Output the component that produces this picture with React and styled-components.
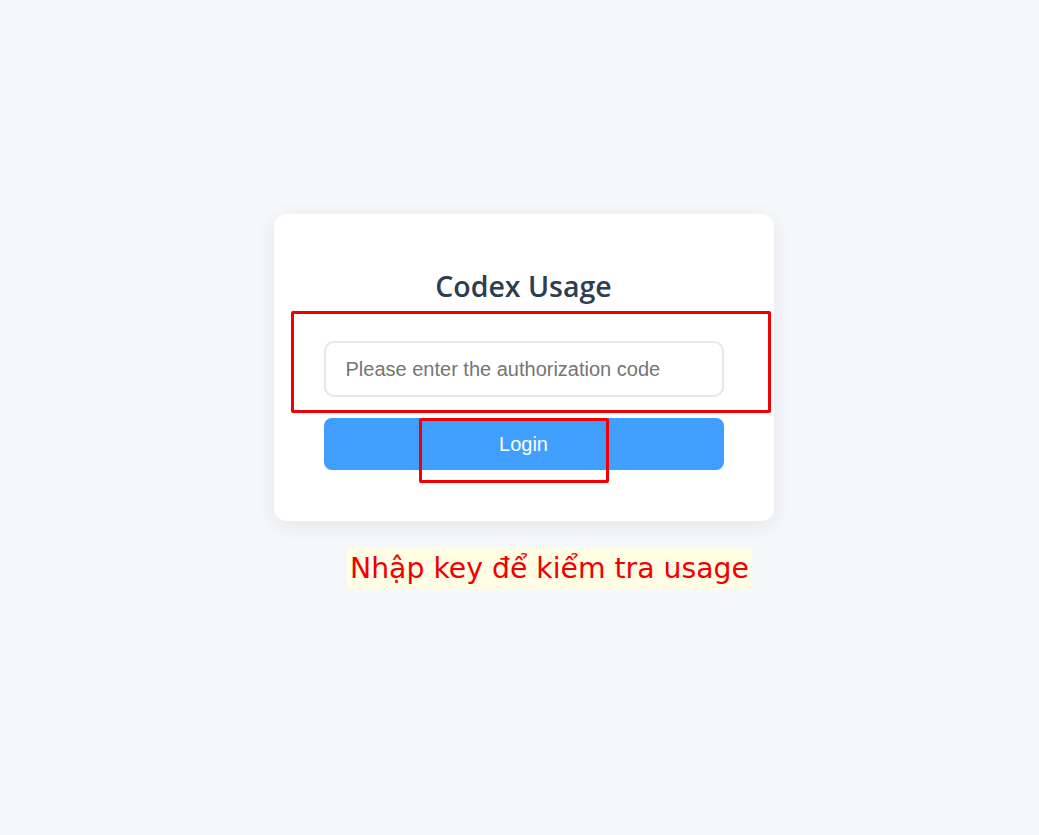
import React, { useState } from 'react'
import styled, { createGlobalStyle } from 'styled-components'

const GlobalStyle = createGlobalStyle`
    html, body {
        margin: 0;
        padding: 0;
        background: #f5f7fa;
    }

    body {
        min-height: 835px;
    }
`

const Page = styled.div`
    min-height: 835px;
    display: flex;
    flex-direction: column;
    align-items: center;
    padding: 214px 0px 0px 8px;
    box-sizing: border-box;
`

const Card = styled.div`
    position: relative;
    width: 500px;
    box-sizing: border-box;
    padding: 54px 50px 51px 50px;
    background: #ffffff;
    border-radius: 12px;
    box-shadow: 0 4px 20px rgba(0, 0, 0, 0.08);
    display: flex;
    flex-direction: column;
    align-items: stretch;
`

const Title = styled.h2`
    margin: 0px 0px 37px 0px;
    text-align: center;
    font-family: 'Open Sans', 'Noto Sans', sans-serif;
    font-weight: 600;
    font-size: 28.5px;
    line-height: 36px;
    color: #2c3e50;
`

const CodeInput = styled.input`
    height: 56px;
    box-sizing: border-box;
    padding: 0px 20px;
    border: 2px solid #e4e7ed;
    border-radius: 10px;
    outline: none;
    font-family: 'Liberation Sans', Arial, sans-serif;
    font-size: 20px;
    color: #303133;
    background: #ffffff;

    &::placeholder {
        color: #757575;
    }
`

const LoginButton = styled.button`
    margin-top: 21px;
    height: 52px;
    border: none;
    border-radius: 8px;
    background: #409eff;
    color: #ffffff;
    font-family: 'Liberation Sans', Arial, sans-serif;
    font-size: 20px;
    cursor: pointer;
`

// red marker boxes drawn over the card
const Marker = styled.div`
    position: absolute;
    left: ${(p) => p.left}px;
    top: ${(p) => p.top}px;
    width: ${(p) => p.width}px;
    height: ${(p) => p.height}px;
    box-sizing: border-box;
    border: 3px solid #f00000;
    border-radius: 2px;
    pointer-events: none;
`

const Note = styled.div`
    margin: 27px 0px 0px 52px;
    padding: 0px 3px;
    height: 41px;
    display: flex;
    align-items: center;
    background: #fffde3;
    font-family: 'DejaVu Sans', 'Noto Sans', sans-serif;
    font-size: 28.3px;
    color: #f00000;
`

export default function App() {
    const [code, setCode] = useState('')

    return (
        <>
            <GlobalStyle />
            <Page>
                <Card>
                    <Title>{'Codex Usage'}</Title>
                    <CodeInput
                        type={'text'}
                        placeholder={'Please enter the authorization code'}
                        value={code}
                        onChange={(e) => setCode(e.target.value)}
                    />
                    <LoginButton>{'Login'}</LoginButton>
                    <Marker left={17} top={97} width={480} height={102} />
                    <Marker left={145} top={204} width={190} height={65} />
                </Card>
                <Note>{'Nhập key để kiểm tra usage'}</Note>
            </Page>
        </>
    )
}
